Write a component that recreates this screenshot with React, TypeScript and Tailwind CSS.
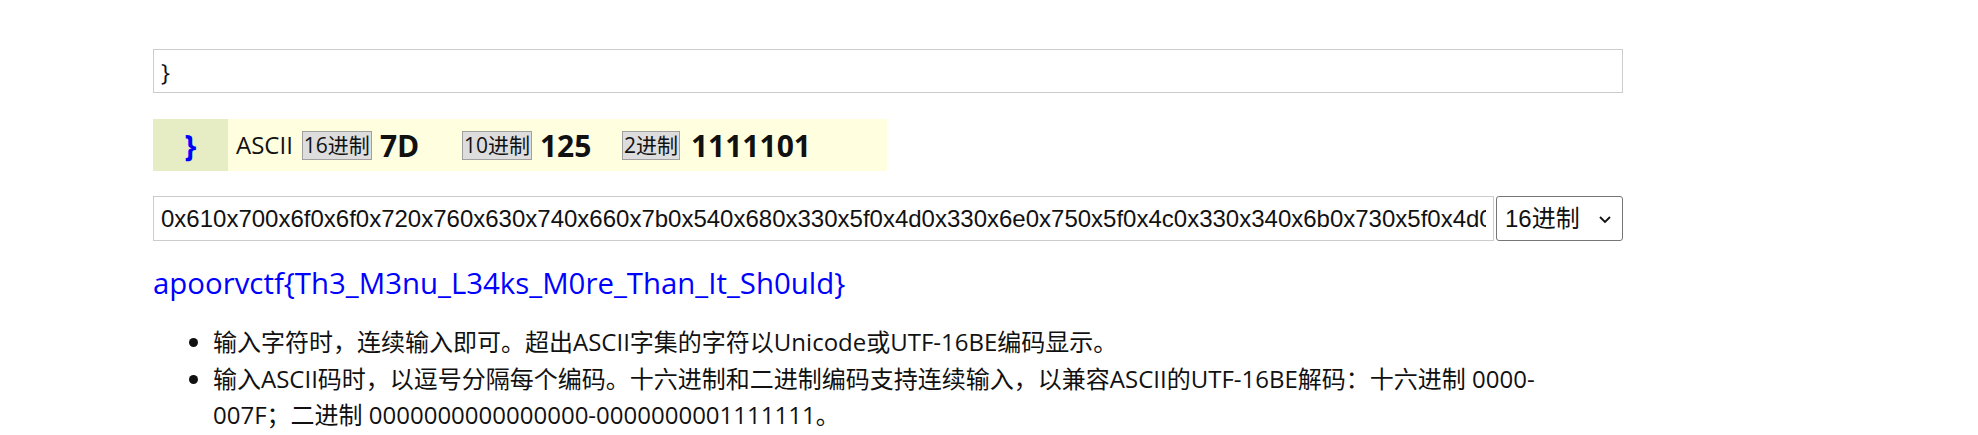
import React from 'react';

const sans = "font-['Open_Sans','Noto_Sans_CJK_SC',sans-serif]";
const arial = "font-['Liberation_Sans','Noto_Sans_CJK_SC',sans-serif]";

function Badge({ children }: { children: React.ReactNode }) {
  return (
    <span className="inline-flex h-[29px] items-center border border-[#a0a0a0] bg-[#dddddd] px-[1px] text-[21px] leading-none text-[#111]">
      {children}
    </span>
  );
}

export default function App() {
  const hex =
    '0x610x700x6f0x6f0x720x760x630x740x660x7b0x540x680x330x5f0x4d0x330x6e0x750x5f0x4c0x330x340x6b0x730x5f0x4d0x300x720x650x5f0x540x680x610x6e0x5f0x490x740x5f0x530x680x300x750x6c0x640x7d';

  return (
    <div className={`min-h-[435px] w-full bg-white text-[#111] ${sans}`}>
      <div className="ml-[153px] w-[1470px] pt-[49px]">
        {/* char input */}
        <input
          readOnly
          defaultValue="}"
          className={`block h-[44px] w-full border border-[#cccccc] px-[7px] text-[24px] text-[#111] outline-none ${sans}`}
        />

        {/* decoded char info */}
        <div className="mt-[26px] flex h-[52px] w-[734px] items-center bg-[#ffffe0]">
          <div className="flex h-full w-[75px] items-center justify-center bg-[#e6ecc3] text-[30px] font-bold text-[#0000ff]">
            {'}'}
          </div>
          <span className="ml-2 text-[24px]">ASCII</span>
          <span className="ml-[9px]">
            <Badge>16进制</Badge>
          </span>
          <span className="ml-2 w-[82px] text-[30px] font-bold">7D</span>
          <Badge>10进制</Badge>
          <span className="ml-2 w-[82px] text-[30px] font-bold">125</span>
          <Badge>2进制</Badge>
          <span className="ml-[11px] text-[30px] font-bold">1111101</span>
        </div>

        {/* code input + base select */}
        <div className="mt-[25px] flex h-[45px] gap-[2px]">
          <input
            readOnly
            defaultValue={hex}
            className={`min-w-0 flex-1 border border-[#cccccc] px-[7px] text-[24px] text-[#111] outline-none ${arial}`}
          />
          <div className={`flex w-[127px] items-center justify-between rounded-[3px] border border-[#767676] pl-[8px] pr-[10px] text-[24px] ${arial}`}>
            <span>16进制</span>
            <svg width="14" height="14" viewBox="0 0 14 14" fill="none">
              <path d="M2 5l5 5 5-5" stroke="#111" strokeWidth="1.8" />
            </svg>
          </div>
        </div>

        {/* decoded flag */}
        <div className="mt-[20px] text-[29.4px] leading-[45px] text-[#0000ff]">
          apoorvctf{'{'}Th3_M3nu_L34ks_M0re_Than_It_Sh0uld{'}'}
        </div>

        {/* notes */}
        <ul className="mt-[18px] list-disc pl-[60px] pr-[14px] text-[24px] leading-[36.5px]">
          <li>输入字符时，连续输入即可。超出ASCII字集的字符以Unicode或UTF-16BE编码显示。</li>
          <li>
            输入ASCII码时，以逗号分隔每个编码。十六进制和二进制编码支持连续输入，以兼容ASCII的UTF-16BE解码：十六进制 0000-007F；二进制
            0000000000000000-0000000001111111。
          </li>
        </ul>
      </div>
    </div>
  );
}
